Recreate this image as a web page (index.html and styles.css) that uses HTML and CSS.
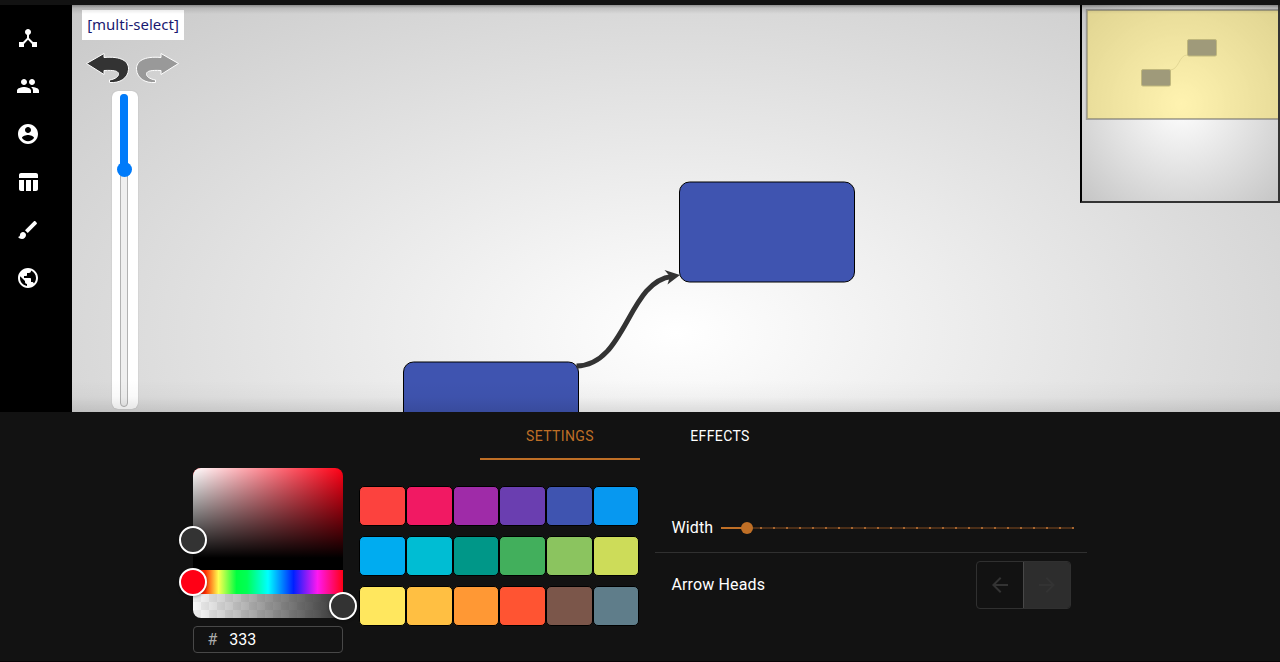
FILE: index.html
```html
<!DOCTYPE html>
<html lang="en">
<head>
<meta charset="utf-8">
<title>Graph editor</title>
<link rel="stylesheet" href="styles.css">
</head>
<body>
<div class="topbar"></div>
<main class="workspace">
  <nav class="sidebar">
    <svg viewBox="0 0 24 24"><path d="M17 16l-4-4V8.82C14.16 8.4 15 7.3 15 6c0-1.66-1.34-3-3-3S9 4.34 9 6c0 1.3.84 2.4 2 2.82V12l-4 4H3v5h5v-3.05l4-4.2 4 4.2V21h5v-5h-4z"/></svg>
    <svg viewBox="0 0 24 24"><path d="M16 11c1.66 0 2.99-1.34 2.99-3S17.66 5 16 5c-1.66 0-3 1.34-3 3s1.34 3 3 3zm-8 0c1.66 0 2.99-1.34 2.99-3S9.66 5 8 5C6.34 5 5 6.34 5 8s1.34 3 3 3zm0 2c-2.33 0-7 1.17-7 3.5V19h14v-2.5c0-2.33-4.67-3.5-7-3.5zm8 0c-.29 0-.62.02-.97.05 1.16.84 1.97 1.97 1.97 3.45V19h6v-2.5c0-2.33-4.67-3.5-7-3.5z"/></svg>
    <svg viewBox="0 0 24 24"><path d="M12 2C6.48 2 2 6.48 2 12s4.48 10 10 10 10-4.48 10-10S17.52 2 12 2zm0 3c1.66 0 3 1.34 3 3s-1.34 3-3 3-3-1.34-3-3 1.34-3 3-3zm0 14.2c-2.5 0-4.71-1.28-6-3.22.03-1.99 4-3.08 6-3.08 1.99 0 5.97 1.09 6 3.08-1.29 1.94-3.5 3.22-6 3.22z"/></svg>
    <svg viewBox="0 0 24 24"><path d="M10 10.02h5V21h-5zM17 21h3c1.1 0 2-.9 2-2v-9h-5v11zm3-18H5c-1.1 0-2 .9-2 2v3h19V5c0-1.1-.9-2-2-2zM3 19c0 1.1.9 2 2 2h3V10H3v9z"/></svg>
    <svg viewBox="0 0 24 24"><path d="M7 14c-1.66 0-3 1.34-3 3 0 1.31-1.16 2-2 2 .92 1.22 2.49 2 4 2 2.21 0 4-1.79 4-4 0-1.66-1.34-3-3-3zm13.71-9.37l-1.34-1.34c-.39-.39-1.02-.39-1.41 0L9 12.25 11.75 15l8.96-8.96c.39-.39.39-1.02 0-1.41z"/></svg>
    <svg viewBox="0 0 24 24"><path d="M12 2C6.48 2 2 6.48 2 12s4.48 10 10 10 10-4.48 10-10S17.52 2 12 2zm-1 17.93c-3.95-.49-7-3.85-7-7.93 0-.62.08-1.21.21-1.79L9 15v1c0 1.1.9 2 2 2v1.93zm6.9-2.54c-.26-.81-1-1.39-1.9-1.39h-1v-3c0-.55-.45-1-1-1H8v-2h2c.55 0 1-.45 1-1V7h2c1.1 0 2-.9 2-2v-.41c2.93 1.19 5 4.06 5 7.41 0 2.08-.8 3.97-2.1 5.39z"/></svg>
  </nav>
  <section class="canvas">
    <svg class="graph" viewBox="72 5 1208 407">
      <rect class="node" x="679.5" y="182" width="175" height="100" rx="10"/>
      <rect class="node" x="403.5" y="362" width="175" height="100" rx="10"/>
      <path class="edge" d="M576.5 366C626 365.5 628 281 672 276.5"/>
      <path class="edge-head" d="M680 275L664.5 270L670 276.5L667.5 284.5Z"/>
    </svg>
    <div class="tools">
      <div class="mode">[multi-select]</div>
      <div class="history">
        <svg viewBox="0 0 46 34"><path d="M1.5 12.5L19 2.5V6.5C36 5 44 10 43.5 18.500C43 27 35 32.500 24.500 31.500V29C31 28 34 25 33.500 22.500C33 20 29 19 19 19.500V23.500Z"/></svg>
        <svg class="redo" viewBox="0 0 46 34"><path d="M1.500 12.500L19 2.500V6.500C36 5 44 10 43.500 18.500C43 27 35 32.500 24.500 31.500V29C31 28 34 25 33.500 22.500C33 20 29 19 19 19.500V23.500Z"/></svg>
      </div>
      <div class="zoom"><div class="zoom-track"><div class="zoom-fill"></div><div class="zoom-thumb"></div></div></div>
    </div>
    <div class="minimap">
      <svg viewBox="1082 5 196 196">
        <path class="mini-edge" d="M1170 70C1179 70 1179 55 1187 55"/>
        <rect class="mini-node" x="1187.500" y="39.500" width="29" height="16.500" rx="1.500"/>
        <rect class="mini-node" x="1141.500" y="69.500" width="29" height="16.500" rx="1.500"/>
        <rect class="mini-view" x="1086.800" y="10" width="200" height="109" />
      </svg>
    </div>
    <div class="shade"></div>
  </section>
</main>
<section class="panel">
  <div class="tabs"><div class="tab active">SETTINGS</div><div class="tab">EFFECTS</div></div>
  <div class="settings">
    <div class="picker">
      <div class="picker-body">
        <div class="saturation"><i class="knob knob-gray"></i></div>
        <div class="hue"><i class="knob knob-red"></i></div>
        <div class="alpha"><i class="knob knob-end"></i></div>
      </div>
      <div class="hex"><span class="hash">#</span><span>333</span></div>
    </div>
    <div class="swatches">
      <div class="c1"></div><div class="c2"></div><div class="c3"></div><div class="c4"></div><div class="c5"></div><div class="c6"></div>
      <div class="c7"></div><div class="c8"></div><div class="c9"></div><div class="c10"></div><div class="c11"></div><div class="c12"></div>
      <div class="c13"></div><div class="c14"></div><div class="c15"></div><div class="c16"></div><div class="c17"></div><div class="c18"></div>
    </div>
    <div class="options">
      <div class="option option-width"><span class="label">Width</span><div class="range"><div class="range-fill"></div><div class="range-thumb"></div></div></div>
      <div class="option option-heads"><span class="heads-label">Arrow Heads</span>
        <div class="toggle">
          <div class="toggle-btn"><svg viewBox="0 0 24 24"><path d="M20 11H7.830l5.590-5.590L12 4l-8 8 8 8 1.410-1.410L7.830 13H20v-2z"/></svg></div>
          <div class="toggle-btn selected"><svg viewBox="0 0 24 24"><path d="M12 4l-1.410 1.410L16.170 11H4v2h12.170l-5.580 5.590L12 20l8-8z"/></svg></div>
        </div>
      </div>
    </div>
  </div>
</section>
</body>
</html>
```
FILE: styles.css
```css
* { box-sizing: border-box; }
body { margin: 0; width: 1280px; height: 662px; overflow: hidden; display: flex; flex-direction: column; background: #121212; color: #fff; font: 16px Roboto, sans-serif; }
svg { display: block; }
.topbar { height: 5px; background: #121212; }
.workspace { height: 407px; display: flex; }
.sidebar { width: 72px; background: #000; padding: 21px 16px; display: flex; flex-direction: column; gap: 24px; }
.sidebar svg { width: 24px; height: 24px; fill: #fff; }
.canvas { position: relative; flex: 1; overflow: hidden; background: radial-gradient(ellipse 854px 464px at 604px 328px, #fff, #c8c8c8); }
.graph { position: absolute; inset: 0; width: 1208px; height: 407px; }
.node { fill: #3f54b0; stroke: #000; stroke-width: 1; }
.edge { fill: none; stroke: #333; stroke-width: 5; }
.edge-head { fill: #333; }
.tools { position: absolute; inset: 5px auto auto 10px; display: flex; flex-direction: column; align-items: flex-start; }
.mode { width: 102px; height: 30px; background: #fff; color: #191970; font: 15px/28px "Noto Sans", sans-serif; text-align: center; white-space: nowrap; }
.history { display: flex; gap: 3px; padding: 11px 0 0 2.5px; }
.history svg { width: 46px; height: 34px; fill: #333; stroke: #fff; stroke-width: 1; }
.history .redo { transform: scaleX(-1); fill: #999; }
.zoom { width: 26px; height: 318px; margin: 6px 0 0 30px; padding: 3px 8px 2px; background: #fff; border-radius: 6px; box-shadow: 0 0 1px #999; }
.zoom-track { position: relative; width: 8px; height: 313px; background: #efefef; border: 1px solid #b2b2b2; border-radius: 4px; }
.zoom-fill { width: 8px; height: 76px; margin: -1px; background: #007bfa; border-radius: 4px 4px 0 0; }
.zoom-thumb { position: absolute; left: -4.5px; top: 66.500px; width: 15px; height: 15px; border-radius: 50%; background: #007bfa; }
.minimap { position: absolute; right: 0; top: 0; width: 200px; height: 198px; border: solid #333; border-width: 0 2px 2px; border-left-color: #000; background: radial-gradient(ellipse 141px 141px at 99px 99px, #fff, #c4c4c4); }
.minimap svg { width: 196px; height: 196px; }
.mini-node { fill: #505e9d; stroke: #8d93a0; stroke-width: 1; }
.mini-edge { fill: none; stroke: #ccc; stroke-width: 1; }
.mini-view { fill: #ffe54f; fill-opacity: .45; stroke: #666; stroke-opacity: .5; stroke-width: 2; }
.shade { position: absolute; inset: 0; pointer-events: none; background: linear-gradient(#0005, #0000001c 3px, #0000 9px), linear-gradient(#0000 375px, #00000006 392px, #0000001c 407px); }
.panel { height: 250px; background: #121212; border-bottom: 1px solid #090306; display: flex; flex-direction: column; }
.tabs { display: flex; justify-content: center; height: 48px; padding-bottom: 0; }
.tab { width: 160px; height: 48px; text-align: center; font-size: 14px; line-height: 48px; letter-spacing: .4px; }
.tab.active { color: #bf6f26; border-bottom: 2px solid #bf6f26; }
.settings { display: flex; padding: 8px 0 0 193px; }
.picker { width: 150px; display: flex; flex-direction: column; gap: 8px; }
.picker-body { height: 150px; }
.saturation, .hue, .alpha { position: relative; }
.saturation { height: 102px; border-radius: 8px 8px 0 0; border-bottom: 12px solid #000; background: linear-gradient(to top, #000, #0000), linear-gradient(to right, #fff, #fff0), #ff0015; }
.hue { height: 24px; background: linear-gradient(to right, #f00015 0%, #ff2a00 8%, #ffff50 17%, #00ff40 29%, #00ff55 36%, #0ff 50%, #0020ff 67%, #ff18f0 83%, #ff0015 100%); }
.alpha { height: 24px; border-radius: 0 0 8px 8px; background: linear-gradient(to right, #3330, #333), repeating-conic-gradient(#fafafa 0 25%, #eee 0 50%) 0 0 / 16px 16px; }
.knob { position: absolute; width: 28px; height: 28px; left: -14px; top: -2px; border: 2px solid #fff; border-radius: 50%; background: #333; box-shadow: 0 1px 3px #0005; z-index: 1; }
.knob-gray { top: 58px; }
.knob-red { background: #ff0015; }
.knob-end { left: 136px; }
.hex { height: 27px; border: 1px solid #484848; border-radius: 4px; display: flex; align-items: center; padding-left: 13.5px; gap: 12px; }
.hash { color: #aaa; }
.swatches { width: 280px; height: 150px; margin: 13px 0 0 16.2px; display: grid; grid-template-columns: repeat(6, 1fr); grid-auto-rows: 40px; row-gap: 10px; padding-top: 5px; }
.swatches div { border: 1px solid #000; border-radius: 5px; }
.c1 { background: #fc423e; }.c2 { background: #f11963; }.c3 { background: #9f2ba8; }.c4 { background: #6a3eb0; }.c5 { background: #3f54b0; }.c6 { background: #0798f0; }
.c7 { background: #00acf0; }.c8 { background: #00bdd3; }.c9 { background: #009788; }.c10 { background: #42af5c; }.c11 { background: #8bc45f; }.c12 { background: #cddc59; }
.c13 { background: #ffe75e; }.c14 { background: #ffbf42; }.c15 { background: #ff9834; }.c16 { background: #ff5432; }.c17 { background: #7b564a; }.c18 { background: #5f7d8a; }
.options { width: 432px; margin: 35px 0 0 15.8px; }
.option { display: flex; align-items: center; padding: 0 13px 0 16.500px; letter-spacing: .13px; }
.option-width { height: 50px; border-bottom: 1px solid #303030; }
.label { width: 49.500px; }
.range { position: relative; width: 353px; height: 2px; background: repeating-linear-gradient(to right, #a76630 0 2px, #4a2e18 2px 13px); }
.range-fill { width: 26px; height: 2px; background: #bf6f26; }
.range-thumb { position: absolute; left: 20px; top: -5px; width: 12px; height: 12px; border-radius: 50%; background: #bf6f26; }
.option-heads { height: 64px; justify-content: space-between; padding-right: 16px; }
.heads-label { padding-bottom: 2px; }
.toggle { display: flex; width: 95px; height: 48px; border: 1px solid #303030; border-radius: 4px; overflow: hidden; }
.toggle-btn { flex: 1; display: flex; align-items: center; justify-content: center; }
.toggle-btn svg { width: 24px; height: 24px; fill: #333; }
.selected { background: #2d2d2d; border-left: 1px solid #484848; }
```
